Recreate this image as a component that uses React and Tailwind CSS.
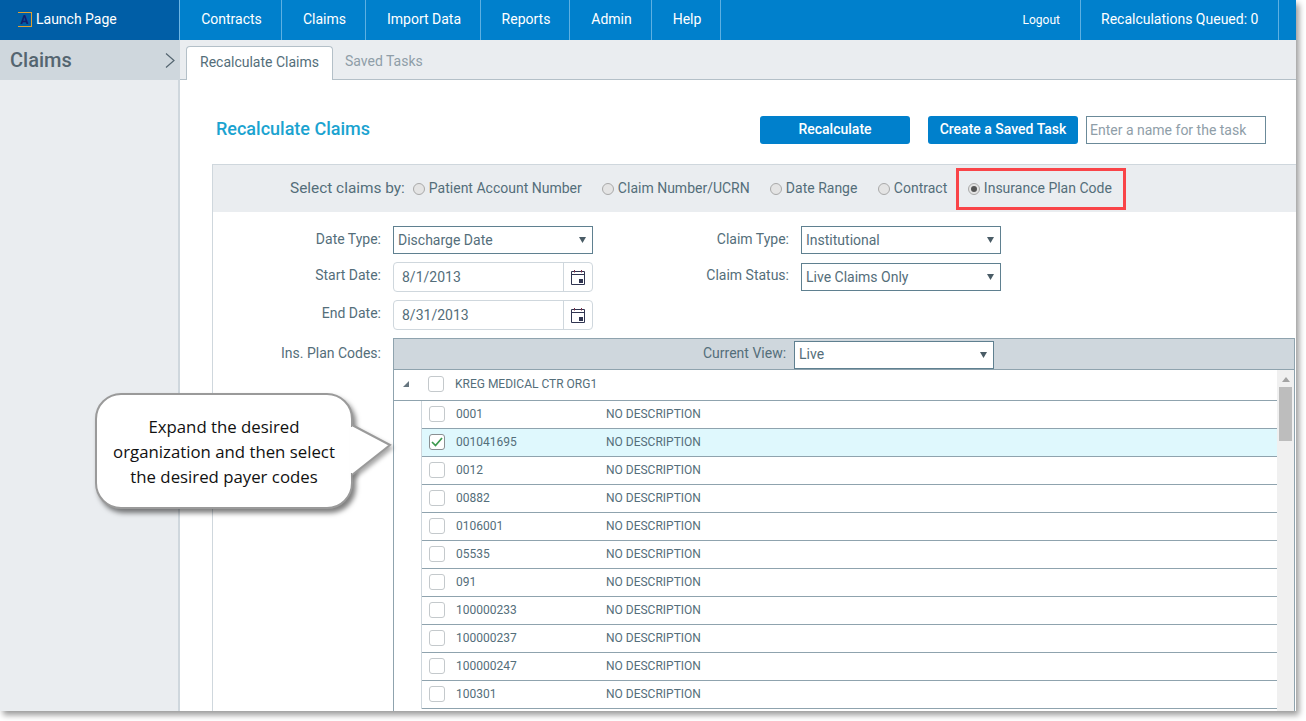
const nav = [
  { label: "Contracts", w: "w-[102px]" },
  { label: "Claims", w: "w-[84px]" },
  { label: "Import Data", w: "w-[115px]" },
  { label: "Reports", w: "w-[89px]" },
  { label: "Admin", w: "w-[82px]" },
  { label: "Help", w: "w-[69px]" },
];

const codes = ["0001", "001041695", "0012", "00882", "0106001", "05535", "091", "100000233", "100000237", "100000247", "100301"];

function Radio({ label, checked, className }) {
  return (
    <div className={`flex items-center gap-[4px] ${className || ""}`}>
      <span className="w-[12px] h-[12px] rounded-full border border-[#a9a9a9] bg-[#e4e4e4] flex items-center justify-center">
        {checked && <span className="w-[6px] h-[6px] rounded-full bg-[#555]" />}
      </span>
      <span>{label}</span>
    </div>
  );
}

function Select({ value, className }) {
  return (
    <div className={`h-[28px] w-[200px] bg-white border border-[#5f8090] flex items-center justify-between pl-[4px] pr-[6px] text-[14px] text-[#546e7a] ${className || ""}`}>
      <span>{value}</span>
      <svg width="7" height="6" viewBox="0 0 7 6"><path d="M0 0h7L3.5 6z" fill="#4a5c66" /></svg>
    </div>
  );
}

function DateInput({ value }) {
  return (
    <div className="h-[30px] w-[200px] flex rounded-[4px] border border-[#cfd7dd] bg-white text-[14px] text-[#546e7a]">
      <span className="flex-1 pl-[8px] leading-[28px]">{value}</span>
      <span className="w-[29px] border-l border-[#cfd7dd] flex items-center justify-center">
        <svg width="14" height="16" viewBox="0 0 14 16" fill="none">
          <path d="M.5 2.5h13v13H.5z" stroke="#2f3450" />
          <path d="M0 5.5h14" stroke="#2f3450" />
          <path d="M3.5 1v2.5M10.5 1v2.5" stroke="#7a2f4a" />
          <rect x="8" y="10" width="4" height="4" fill="#2f3450" />
        </svg>
      </span>
    </div>
  );
}

function Box({ checked }) {
  return (
    <span className={`w-[16px] h-[16px] rounded-[3px] border bg-white flex items-center justify-center shrink-0 ${checked ? "border-[#8a8f92]" : "border-[#c4c9cc]"}`}>
      {checked && (
        <svg width="12" height="10" viewBox="0 0 12 10" fill="none"><path d="M1 5l3.5 3.5L11 1" stroke="#3c9a4e" strokeWidth="1.7" /></svg>
      )}
    </span>
  );
}

export default function App() {
  return (
    <div className="w-[1306px] h-[721px] bg-white overflow-hidden relative [font-family:Roboto,sans-serif]">
      <div className="w-[1296px] h-[711px] flex flex-col shadow-[3px_4px_6px_rgba(0,0,0,0.4)] overflow-hidden bg-white">
        {/* top bar */}
        <div className="h-[40px] flex bg-[#0080cc] text-white text-[14px] shrink-0">
          <div className="w-[180px] bg-[#005ea6] flex items-center pl-[18px] pb-[2px] gap-[4px] border-r border-[#6db6e4]">
            <span className="w-[14px] h-[15px] border border-[#e0a030] border-l-0 text-[#14206e] text-[12px] font-bold leading-[14px] text-center">A</span>
            <span>Launch Page</span>
          </div>
          {nav.map((n) => (
            <div key={n.label} className={`${n.w} border-r border-[#5db0e2] flex items-center justify-center pl-[2px] pb-[2px]`}>{n.label}</div>
          ))}
          <div className="flex-1 flex items-center justify-end text-[12px] pr-[20px]">Logout</div>
          <div className="w-[199px] border-x border-[#5db0e2] pl-[20px] pb-[2px] flex items-center">Recalculations Queued: 0</div>
          <div className="w-[17px]" />
        </div>

        <div className="flex flex-1 min-h-0">
          {/* sidebar */}
          <div className="w-[180px] shrink-0 bg-[#eaedf0] border-r-2 border-[#cfd7dd]">
            <div className="h-[40px] bg-[#cfd7dd] flex items-center justify-between pl-[10px] pr-[3px] text-[20px] font-medium text-[#546570]">
              <span>Claims</span>
              <svg width="10" height="15" viewBox="0 0 10 15" fill="none"><path d="M1 .5l8 7-8 7" stroke="#546570" strokeWidth="1.2" /></svg>
            </div>
          </div>

          <div className="flex-1 min-w-0 flex flex-col">
            {/* tabs */}
            <div className="h-[40px] shrink-0 bg-[#eaedf0] border-b border-[#b4c0c8] flex items-end pl-[6px] text-[14px]">
              <div className="h-[34px] w-[147px] -mb-px bg-white border border-b-0 border-[#b4c0c8] rounded-t-[4px] pb-[2px] flex items-center justify-center text-[#546e7a]">Recalculate Claims</div>
              <div className="h-[34px] pl-[12px] pb-[1px] flex items-center text-[#8f9ea8]">Saved Tasks</div>
            </div>

            {/* title + actions */}
            <div className="h-[84px] shrink-0 flex items-center pl-[36px] pt-[16px] pr-[30px] text-[14px]">
              <h1 className="text-[18px] font-medium text-[#1ba3d0] flex-1 pb-[4px]">Recalculate Claims</h1>
              <button className="w-[150px] h-[28px] bg-[#0080cc] text-white rounded-[3px] font-medium pb-[2px]">Recalculate</button>
              <button className="w-[150px] h-[28px] ml-[18px] bg-[#0080cc] text-white rounded-[3px] font-medium pb-[2px]">Create a Saved Task</button>
              <div className="w-[180px] h-[28px] ml-[8px] border border-[#6b8a99] pl-[3px] flex items-center text-[#8f9ea8]">Enter a name for the task</div>
            </div>

            {/* panel */}
            <div className="flex-1 min-h-0 ml-[32px] border-l border-t border-[#cfd7dd] text-[14px] text-[#546e7a]">
              <div className="h-[47px] bg-[#eaedf0] flex items-center pl-[77px]">
                <span className="text-[15.4px] mr-[8px]">Select claims by:</span>
                <Radio label="Patient Account Number" className="w-[189px]" />
                <Radio label="Claim Number/UCRN" className="w-[168px]" />
                <Radio label="Date Range" className="w-[108px]" />
                <Radio label="Contract" className="w-[78px]" />
                <div className="h-[42px] w-[170px] border-[3px] border-[#f94448] flex items-center pl-[9px]">
                  <Radio label="Insurance Plan Code" checked />
                </div>
              </div>

              {/* date fields */}
              <div className="flex pt-[14px] pl-[12px]">
                <div className="w-[156px] flex flex-col items-end pr-0 text-[14px]">
                  <div className="h-[28px] mb-[8px] leading-[26px]">Date Type:</div>
                  <div className="h-[30px] mb-[8px] leading-[26px]">Start Date:</div>
                  <div className="h-[30px] leading-[26px]">End Date:</div>
                </div>
                <div className="ml-[12px] flex flex-col gap-[8px] w-[200px]">
                  <Select value="Discharge Date" />
                  <DateInput value="8/1/2013" />
                  <DateInput value="8/31/2013" />
                </div>
                <div className="w-[196px] flex flex-col items-end">
                  <div className="h-[28px] mb-[9px] leading-[26px]">Claim Type:</div>
                  <div className="h-[28px] leading-[24px]">Claim Status:</div>
                </div>
                <div className="ml-[12px] flex flex-col gap-[9px]">
                  <Select value="Institutional" />
                  <Select value="Live Claims Only" />
                </div>
              </div>

              {/* plan codes */}
              <div className="flex pt-[8px] pl-[12px]">
                <div className="w-[156px] text-right pt-[5px]">Ins. Plan Codes:</div>
                <div className="ml-[12px] w-[902px] h-[400px] border-x border-t border-[#8fa3ae] overflow-hidden">
                  <div className="h-[31px] bg-[#cfd7dd] border-b border-[#8fa3ae] flex items-center pl-[309px] gap-[8px]">
                    <span className="pb-[2px]">Current View:</span>
                    <Select value="Live" className="h-[26px] mt-[1px]" />
                  </div>
                  <div className="flex">
                    <div className="flex-1 min-w-0">
                      <div className="h-[31px] border-b border-[#8fa3ae] pb-[2px] flex items-center text-[12px]">
                        <svg width="6" height="6" viewBox="0 0 6 6" className="ml-[9px]"><path d="M6 0v6H0z" fill="#66757f" /></svg>
                        <span className="ml-[19px]"><Box /></span>
                        <span className="ml-[11px]">KREG MEDICAL CTR ORG1</span>
                      </div>
                      <div className="ml-[27px] border-l border-[#cfd7dd]">
                        {codes.map((c) => (
                          <div key={c} className={`h-[28px] border-b border-[#8fa3ae] flex items-center text-[12px] pl-[7px] pb-[2px] ${c === "001041695" ? "bg-[#dff8fd]" : ""}`}>
                            <Box checked={c === "001041695"} />
                            <span className="ml-[11px] w-[150px]">{c}</span>
                            <span>NO DESCRIPTION</span>
                          </div>
                        ))}
                      </div>
                    </div>
                    {/* scrollbar */}
                    <div className="w-[17px] shrink-0 bg-[#f0f0f0] flex flex-col items-center h-[400px]">
                      <svg width="8" height="5" viewBox="0 0 8 5" className="mt-[7px] mb-[5px]"><path d="M4 0l4 5H0z" fill="#a3a3a3" /></svg>
                      <div className="w-[13px] h-[54px] bg-[#bdbdbd]" />
                    </div>
                  </div>
                </div>
              </div>
            </div>
          </div>
        </div>
      </div>

      {/* callout */}
      <div className="absolute left-[95px] top-[393px] w-[258px] h-[116px] rounded-[26px] bg-white border-2 border-[#9a9a9a] shadow-[3px_4px_5px_rgba(0,0,0,0.5)] flex items-center justify-center text-center text-[16.8px] leading-[25px] text-[#111] [font-family:Open_Sans,sans-serif]">
        <span>Expand the desired<br />organization and then select<br />the desired payer codes</span>
      </div>
      <svg width="40" height="52" viewBox="0 0 40 52" className="absolute left-[351px] top-[425px] overflow-visible drop-shadow-[2px_3px_2px_rgba(0,0,0,0.35)]">
        <path d="M1 0L39 20L1 50" fill="white" stroke="#9a9a9a" strokeWidth="2" />
      </svg>
      <div className="absolute left-[350px] top-[427px] w-[3px] h-[46px] bg-white" />
    </div>
  );
}
